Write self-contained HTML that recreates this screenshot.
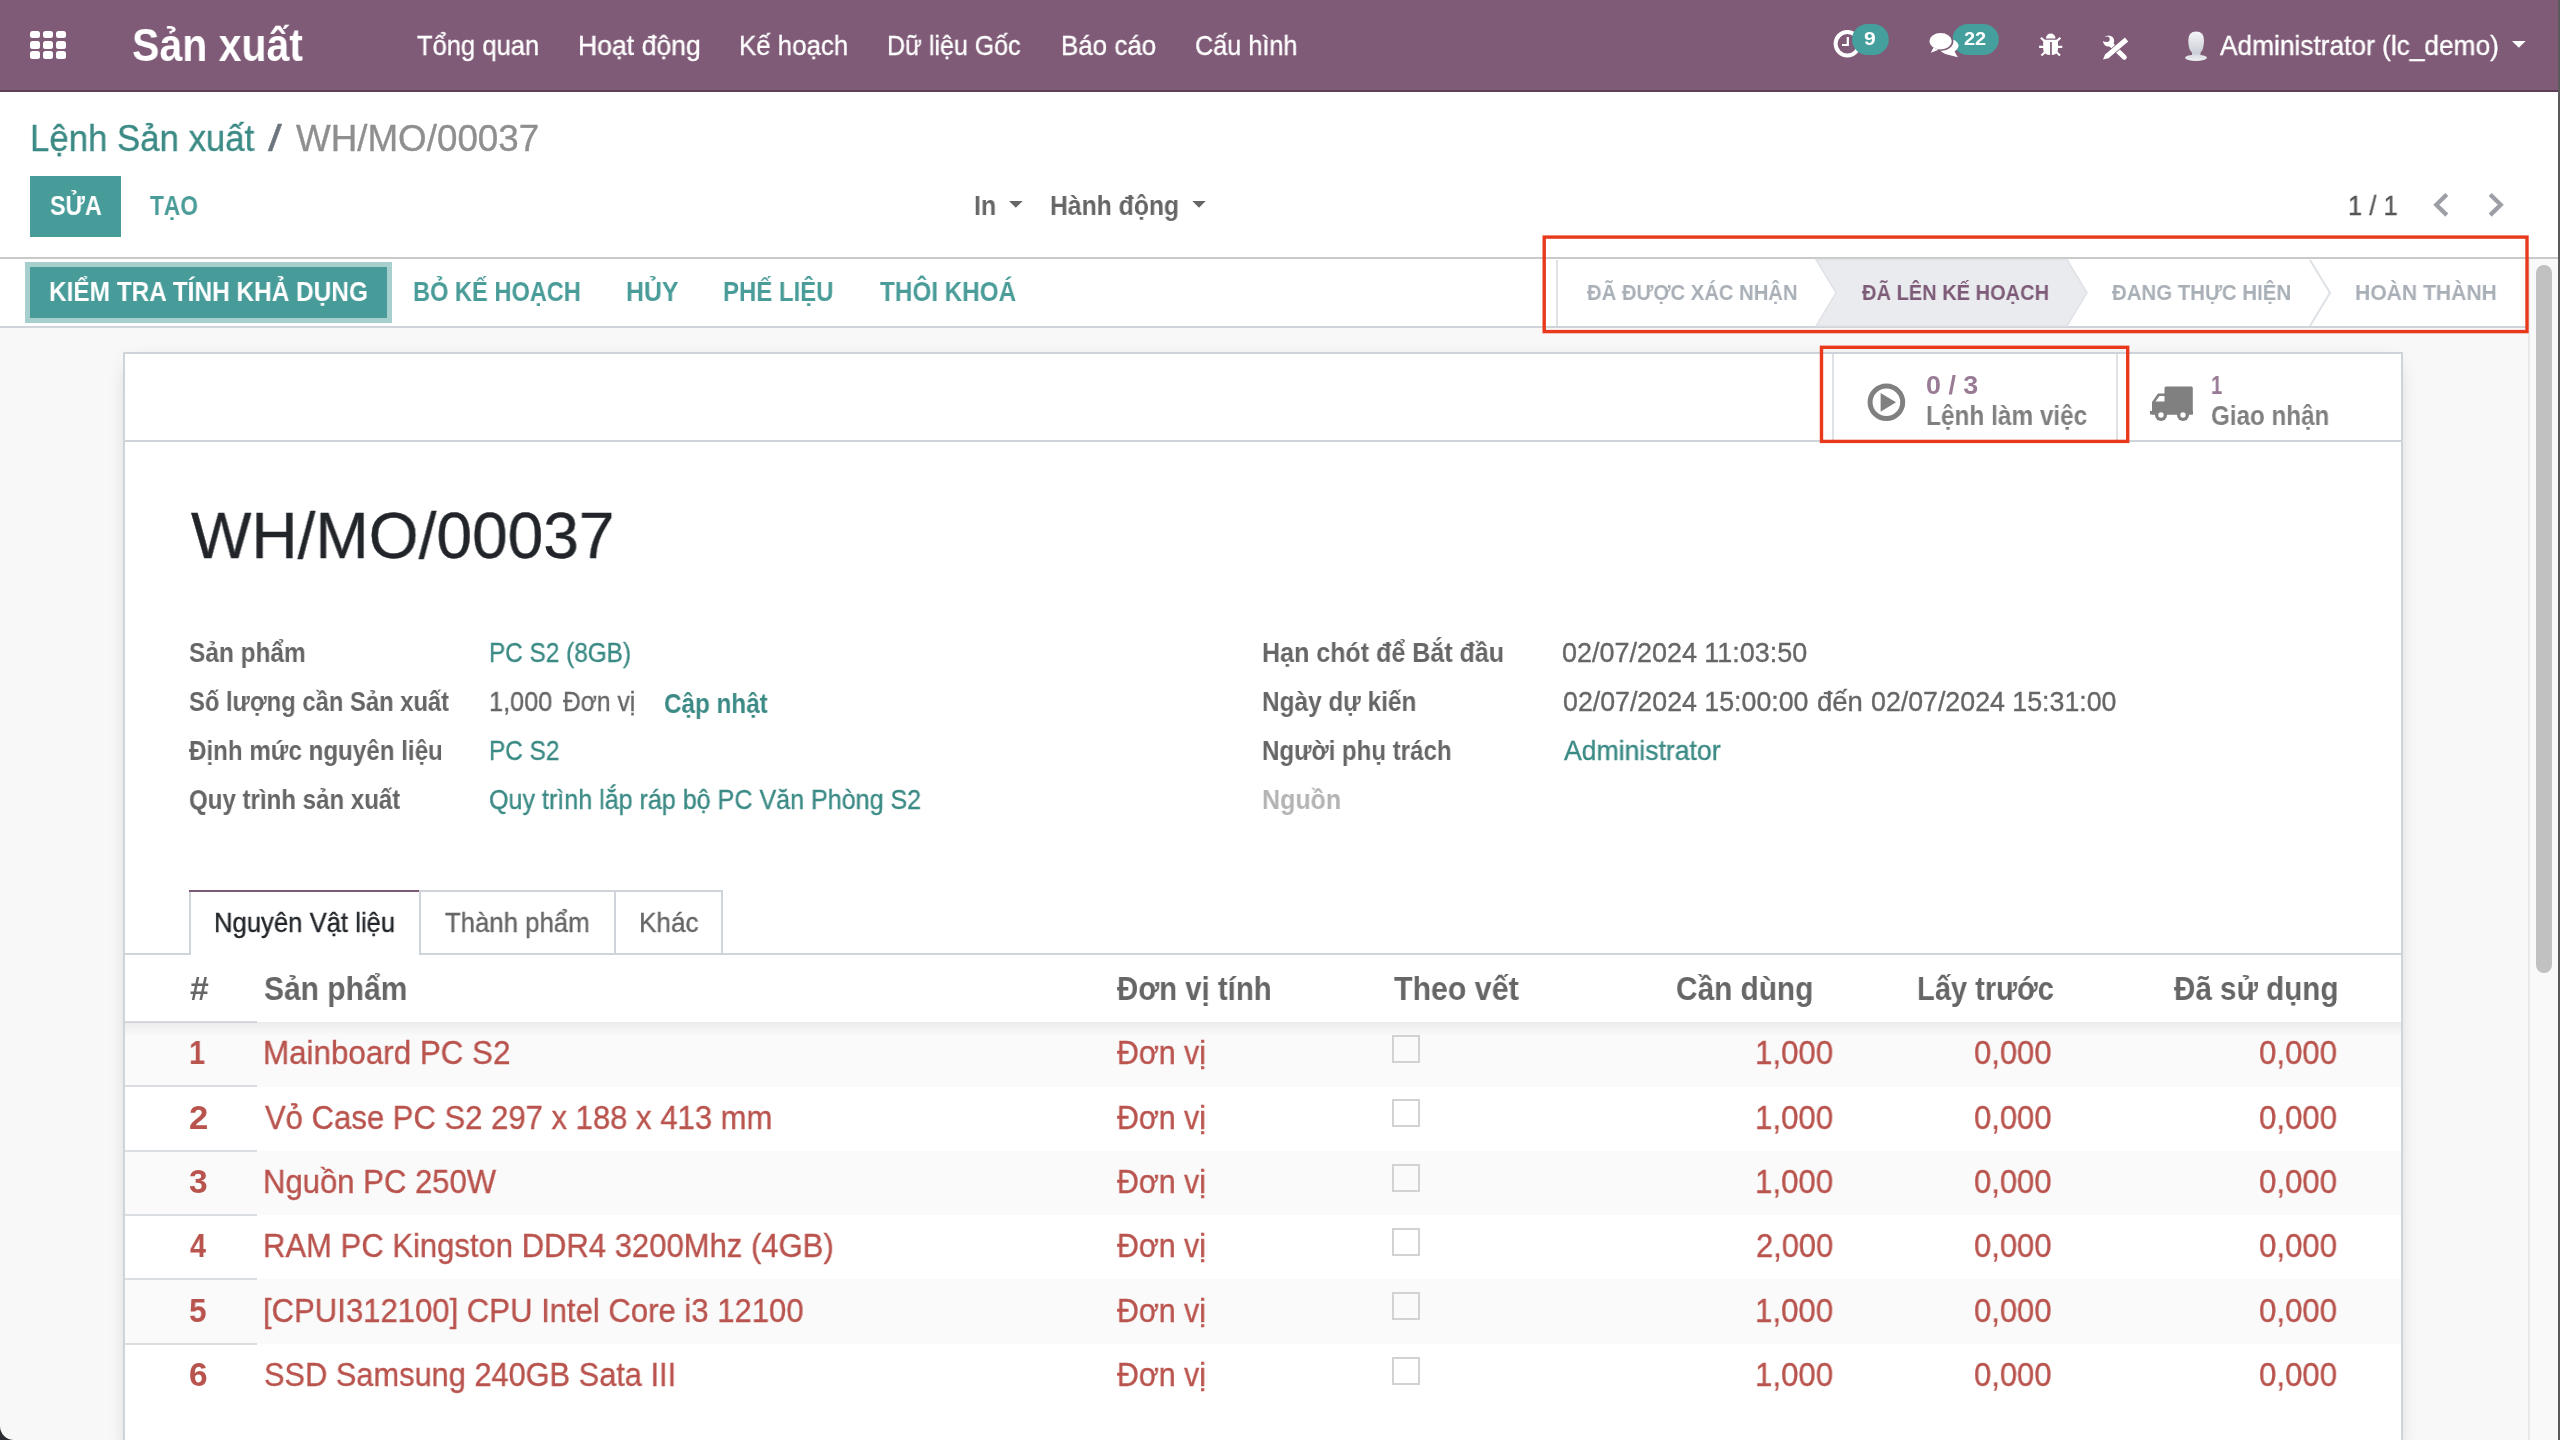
<!DOCTYPE html>
<html><head><meta charset="utf-8"><style>
html,body{margin:0;padding:0}
body{width:2560px;height:1440px;overflow:hidden;position:relative;background:#fff;font-family:"Liberation Sans",sans-serif}
.t{position:absolute;line-height:1;white-space:pre;transform-origin:0 0;will-change:transform}
.n{-webkit-text-stroke:0.35px currentColor}
</style></head><body>
<div style="position:absolute;left:0px;top:0px;width:2560px;height:90px;background:#7f5b77;"></div>
<div style="position:absolute;left:0px;top:90px;width:2560px;height:2px;background:#5e3f58;"></div>
<div style="position:absolute;left:30px;top:30.5px;width:10.299999999999997px;height:7.799999999999997px;background:#fff;border-radius:2.5px;"></div>
<div style="position:absolute;left:30px;top:40.8px;width:10.299999999999997px;height:7.799999999999997px;background:#fff;border-radius:2.5px;"></div>
<div style="position:absolute;left:30px;top:51.1px;width:10.299999999999997px;height:7.799999999999997px;background:#fff;border-radius:2.5px;"></div>
<div style="position:absolute;left:42.8px;top:30.5px;width:10.299999999999997px;height:7.799999999999997px;background:#fff;border-radius:2.5px;"></div>
<div style="position:absolute;left:42.8px;top:40.8px;width:10.299999999999997px;height:7.799999999999997px;background:#fff;border-radius:2.5px;"></div>
<div style="position:absolute;left:42.8px;top:51.1px;width:10.299999999999997px;height:7.799999999999997px;background:#fff;border-radius:2.5px;"></div>
<div style="position:absolute;left:55.8px;top:30.5px;width:10.299999999999997px;height:7.799999999999997px;background:#fff;border-radius:2.5px;"></div>
<div style="position:absolute;left:55.8px;top:40.8px;width:10.299999999999997px;height:7.799999999999997px;background:#fff;border-radius:2.5px;"></div>
<div style="position:absolute;left:55.8px;top:51.1px;width:10.299999999999997px;height:7.799999999999997px;background:#fff;border-radius:2.5px;"></div>
<div style="position:absolute;left:30px;top:176px;width:91px;height:61px;background:#479c99;"></div>
<div style="position:absolute;left:0px;top:257px;width:2560px;height:2px;background:#c9c9c9;"></div>
<div style="position:absolute;left:0px;top:328px;width:2528px;height:1112px;background:#f8f8f8;"></div>
<div style="position:absolute;left:0px;top:326px;width:2528px;height:2px;background:#ced4da;"></div>
<div style="position:absolute;left:25px;top:262px;width:367px;height:61px;background:#a6cfcd;"></div>
<div style="position:absolute;left:30px;top:267px;width:357px;height:51px;background:#479c99;"></div>
<div style="position:absolute;left:1556px;top:260px;width:2px;height:66px;background:#dee2e6;"></div>
<div style="position:absolute;left:2528px;top:259px;width:30px;height:1181px;background:#f9f9f9;"></div>
<div style="position:absolute;left:2528px;top:259px;width:2px;height:1181px;background:#e9e9e9;"></div>
<div style="position:absolute;left:2536px;top:265px;width:16px;height:708px;background:#c1c1c1;border-radius:8px;"></div>
<div style="position:absolute;left:2558px;top:0px;width:2px;height:1440px;background:#5a5a5a;"></div>
<div style="position:absolute;left:123px;top:352px;width:2280px;height:1108px;background:#fff;box-sizing:border-box;border:2px solid #ced4da;box-shadow:0 5px 20px -10px rgba(0,0,0,.35);"></div>
<div style="position:absolute;left:125px;top:440px;width:2276px;height:2px;background:#ced4da;"></div>
<div style="position:absolute;left:1832px;top:354px;width:2px;height:86px;background:#dee2e6;"></div>
<div style="position:absolute;left:2116px;top:354px;width:2px;height:86px;background:#dee2e6;"></div>
<div style="position:absolute;left:125px;top:953px;width:64px;height:2px;background:#ced4da;"></div>
<div style="position:absolute;left:419px;top:953px;width:1982px;height:2px;background:#ced4da;"></div>
<div style="position:absolute;left:189px;top:890px;width:2px;height:65px;background:#ced4da;"></div>
<div style="position:absolute;left:189px;top:890px;width:232px;height:2px;background:#7c5a77;"></div>
<div style="position:absolute;left:419px;top:890px;width:2px;height:65px;background:#ced4da;"></div>
<div style="position:absolute;left:421px;top:890px;width:302px;height:2px;background:#ced4da;"></div>
<div style="position:absolute;left:614px;top:890px;width:2px;height:65px;background:#ced4da;"></div>
<div style="position:absolute;left:721px;top:890px;width:2px;height:65px;background:#ced4da;"></div>
<div style="position:absolute;left:125px;top:1022px;width:2276px;height:64.5px;background:#fafafa;"></div>
<div style="position:absolute;left:125px;top:1021px;width:132px;height:2px;background:#dadee3;"></div>
<div style="position:absolute;left:1392px;top:1035px;width:28px;height:28px;box-sizing:border-box;border:2px solid #d2d2d2;"></div>
<div style="position:absolute;left:125px;top:1085px;width:132px;height:2px;background:#dadee3;"></div>
<div style="position:absolute;left:1392px;top:1099px;width:28px;height:28px;box-sizing:border-box;border:2px solid #d2d2d2;"></div>
<div style="position:absolute;left:125px;top:1150.5px;width:2276px;height:64.5px;background:#fafafa;"></div>
<div style="position:absolute;left:125px;top:1149.5px;width:132px;height:2.0px;background:#dadee3;"></div>
<div style="position:absolute;left:1392px;top:1163.5px;width:28px;height:28.0px;box-sizing:border-box;border:2px solid #d2d2d2;"></div>
<div style="position:absolute;left:125px;top:1214px;width:132px;height:2px;background:#dadee3;"></div>
<div style="position:absolute;left:1392px;top:1228px;width:28px;height:28px;box-sizing:border-box;border:2px solid #d2d2d2;"></div>
<div style="position:absolute;left:125px;top:1279px;width:2276px;height:64.5px;background:#fafafa;"></div>
<div style="position:absolute;left:125px;top:1278px;width:132px;height:2px;background:#dadee3;"></div>
<div style="position:absolute;left:1392px;top:1292px;width:28px;height:28px;box-sizing:border-box;border:2px solid #d2d2d2;"></div>
<div style="position:absolute;left:125px;top:1342.5px;width:132px;height:2.0px;background:#dadee3;"></div>
<div style="position:absolute;left:1392px;top:1356.5px;width:28px;height:28.0px;box-sizing:border-box;border:2px solid #d2d2d2;"></div>
<div style="position:absolute;left:125px;top:1022px;width:2276px;height:14px;background:linear-gradient(rgba(0,0,0,.06),rgba(0,0,0,0));"></div>
<svg style="position:absolute;left:0;top:0" width="2560" height="1440" viewBox="0 0 2560 1440"><polygon points="1816,259.5 2067,259.5 2087,292.8 2067,326 1816,326 1836,292.8" fill="#eaebef" stroke="#dfe2e6" stroke-width="1.5"/><polyline points="2310,260 2330,292.8 2310,326" fill="none" stroke="#dee2e6" stroke-width="2"/><rect x="1544.2" y="237.1" width="982.8" height="94.5" fill="none" stroke="#e8391d" stroke-width="3.4"/><rect x="1821.5" y="347.3" width="306.2" height="94.1" fill="none" stroke="#e8391d" stroke-width="3.4"/><polygon points="1009,201 1022.7,201 1015.85,207.7" fill="#666"/><polygon points="1192.3,201 1205.7,201 1199,207.7" fill="#666"/><polygon points="2512,41 2525.7,41 2518.85,47.8" fill="#fff"/><polyline points="2446.8,194.5 2436.3,204.8 2446.8,215.1" fill="none" stroke="#9ca0a6" stroke-width="4.3"/><polyline points="2490.2,194.5 2500.7,204.8 2490.2,215.1" fill="none" stroke="#9ca0a6" stroke-width="4.3"/><circle cx="1847.3" cy="43.8" r="11.7" fill="none" stroke="#fff" stroke-width="4"/><polyline points="1847.8,37 1847.8,45 1842,45" fill="none" stroke="#fff" stroke-width="2.2"/><rect x="1852" y="24" width="36.8" height="31" rx="15.5" fill="#459f9c"/><rect x="1952.5" y="24" width="46.3" height="31" rx="15.5" fill="#459f9c"/><path d="M1951 55.6 L1957.8 57.2 L1954.6 51.5 Q1959 48 1958.5 45 Q1957 39 1948 39 Q1939 39.5 1938.5 46 Q1939 53.5 1951 55.6Z" fill="#fff"/><ellipse cx="1940.6" cy="41.3" rx="12" ry="9" fill="#fff" stroke="#7f5b77" stroke-width="1.6"/><polygon points="1930.8,52.7 1933.5,47.5 1938.5,49.8" fill="#fff"/><g fill="#fff"><path d="M2045.9 38.4 A4.8 4.9 0 0 1 2055.5 38.4Z"/><path d="M2043.2 39.7 L2058 39.7 L2058 49 Q2058 55 2051 55 Q2043.2 55 2043.2 49Z"/></g><rect x="2050.1" y="42" width="1.7" height="13.5" fill="#7f5b77"/><g stroke="#fff" stroke-width="2.2" fill="none"><path d="M2040.9 37.8 L2044.6 41.1 M2060.4 37.8 L2056.7 41.1 M2039.1 46.8 L2044 46.8 M2062.3 46.8 L2057 46.8 M2041.4 55.5 L2045 52.2 M2060 55.5 L2056.5 52.2"/></g><line x1="2111" y1="44.5" x2="2124.3" y2="57.2" stroke="#fff" stroke-width="5" stroke-linecap="round"/><circle cx="2108.6" cy="41" r="5.6" fill="#fff"/><circle cx="2107" cy="39.3" r="2.7" fill="#7f5b77"/><polygon points="2104.5,36.5 2107.5,39.5 2105,42 2101,40 2102,35.5" fill="#7f5b77"/><polygon points="2103,59.6 2105.1,54.4 2124.9,37.5 2128.2,41.5 2108.5,58.3" fill="#fff" stroke="#7f5b77" stroke-width="1.5" paint-order="stroke"/><defs><linearGradient id="av" x1="0" y1="0" x2="0" y2="1"><stop offset="0" stop-color="#f6f6f8"/><stop offset="1" stop-color="#c8ccd4"/></linearGradient><linearGradient id="av2" x1="0" y1="0" x2="0" y2="1"><stop offset="0" stop-color="#d9dce2"/><stop offset="1" stop-color="#eceef1"/></linearGradient></defs><rect x="2192" y="49" width="8.5" height="8" fill="#cfd3da"/><ellipse cx="2196" cy="57.8" rx="11" ry="3.1" fill="url(#av2)"/><path d="M2188.3 40 Q2188.3 31.5 2196.2 31.5 Q2204 31.5 2204 40 Q2204 54 2196.2 54 Q2188.3 54 2188.3 40Z" fill="url(#av)"/><circle cx="1886.4" cy="402.2" r="16.3" fill="none" stroke="#808080" stroke-width="5"/><polygon points="1880.6,393 1896,402.3 1880.6,411.8" fill="#808080"/><g fill="#808080"><rect x="2164.5" y="386.5" width="28.3" height="28" rx="1.5"/><path d="M2152 402 L2158 393.5 L2165 393.5 L2165 414.5 L2152 414.5 Z"/><rect x="2150" y="411" width="43" height="3.5"/><circle cx="2161" cy="415" r="6"/><circle cx="2183" cy="415" r="6"/></g><g fill="#fff"><path d="M2155.5 401.5 L2159.5 396 L2164.5 396 L2164.5 401.5Z"/><circle cx="2161" cy="415" r="2.7"/><circle cx="2183" cy="415" r="2.7"/></g><path d="M0 1426 A14 14 0 0 0 14 1440 L0 1440Z" fill="#2b2d31"/></svg>
<span class="t" style="left:132.02px;top:22px;font-size:46.76px;font-weight:bold;color:#ffffff;transform:scaleX(0.8772)">Sản xuất</span>
<span class="t n" style="left:417.10px;top:33px;font-size:27.05px;font-weight:normal;color:#ffffff;transform:scaleX(0.9445)">Tổng quan</span>
<span class="t n" style="left:578.23px;top:33px;font-size:27.05px;font-weight:normal;color:#ffffff;transform:scaleX(0.9835)">Hoạt động</span>
<span class="t n" style="left:739.49px;top:33px;font-size:27.05px;font-weight:normal;color:#ffffff;transform:scaleX(0.9550)">Kế hoạch</span>
<span class="t n" style="left:887.25px;top:33px;font-size:27.05px;font-weight:normal;color:#ffffff;transform:scaleX(0.9254)">Dữ liệu Gốc</span>
<span class="t n" style="left:1060.78px;top:33px;font-size:27.05px;font-weight:normal;color:#ffffff;transform:scaleX(0.9583)">Báo cáo</span>
<span class="t n" style="left:1195.07px;top:33px;font-size:27.05px;font-weight:normal;color:#ffffff;transform:scaleX(0.9327)">Cấu hình</span>
<span class="t n" style="left:2219.50px;top:33px;font-size:26.76px;font-weight:normal;color:#ffffff;transform:scaleX(0.9823)">Administrator (lc_demo)</span>
<span class="t" style="left:1864.42px;top:30px;font-size:17.99px;font-weight:bold;color:#ffffff;transform:scaleX(1.1750)">9</span>
<span class="t" style="left:1964.14px;top:30px;font-size:17.99px;font-weight:bold;color:#ffffff;transform:scaleX(1.1111)">22</span>
<span class="t n" style="left:29.93px;top:121px;font-size:36.40px;font-weight:normal;color:#3b8a85;transform:scaleX(0.9556)">Lệnh Sản xuất</span>
<span class="t n" style="left:267.80px;top:121px;font-size:36.40px;font-weight:normal;color:#6c757d;transform:scaleX(1.3700)">/</span>
<span class="t n" style="left:296.30px;top:121px;font-size:36.40px;font-weight:normal;color:#8f8f8f;transform:scaleX(1.0105)">WH/MO/00037</span>
<span class="t" style="left:49.73px;top:193px;font-size:26.76px;font-weight:bold;color:#ffffff;transform:scaleX(0.8724)">SỬA</span>
<span class="t" style="left:149.70px;top:193px;font-size:26.76px;font-weight:bold;color:#4a9c99;transform:scaleX(0.8482)">TẠO</span>
<span class="t" style="left:973.54px;top:193px;font-size:26.76px;font-weight:bold;color:#666666;transform:scaleX(0.9300)">In</span>
<span class="t" style="left:1050.45px;top:193px;font-size:26.76px;font-weight:bold;color:#666666;transform:scaleX(0.9243)">Hành động</span>
<span class="t n" style="left:2347.71px;top:193px;font-size:26.91px;font-weight:normal;color:#555555;transform:scaleX(0.9469)">1 / 1</span>
<span class="t" style="left:48.81px;top:278px;font-size:27.34px;font-weight:bold;color:#ffffff;transform:scaleX(0.8927)">KIỂM TRA TÍNH KHẢ DỤNG</span>
<span class="t" style="left:412.77px;top:278px;font-size:27.34px;font-weight:bold;color:#4a9c99;transform:scaleX(0.8639)">BỎ KẾ HOẠCH</span>
<span class="t" style="left:625.68px;top:278px;font-size:27.34px;font-weight:bold;color:#4a9c99;transform:scaleX(0.9091)">HỦY</span>
<span class="t" style="left:723.25px;top:278px;font-size:27.34px;font-weight:bold;color:#4a9c99;transform:scaleX(0.8770)">PHẾ LIỆU</span>
<span class="t" style="left:879.50px;top:278px;font-size:27.34px;font-weight:bold;color:#4a9c99;transform:scaleX(0.8882)">THÔI KHOÁ</span>
<span class="t" style="left:1587.40px;top:281px;font-size:22.73px;font-weight:bold;color:#a9afb6;transform:scaleX(0.8906)">ĐÃ ĐƯỢC XÁC NHẬN</span>
<span class="t" style="left:1861.60px;top:281px;font-size:22.73px;font-weight:bold;color:#7d5a77;transform:scaleX(0.8820)">ĐÃ LÊN KẾ HOẠCH</span>
<span class="t" style="left:2112.30px;top:281px;font-size:22.73px;font-weight:bold;color:#a9afb6;transform:scaleX(0.8985)">ĐANG THỰC HIỆN</span>
<span class="t" style="left:2354.87px;top:281px;font-size:22.73px;font-weight:bold;color:#a9afb6;transform:scaleX(0.9287)">HOÀN THÀNH</span>
<span class="t" style="left:1926.23px;top:372px;font-size:26.47px;font-weight:bold;color:#9a7b96;transform:scaleX(1.0150)">0 / 3</span>
<span class="t" style="left:1926.19px;top:403px;font-size:26.98px;font-weight:bold;color:#808080;transform:scaleX(0.9043)">Lệnh làm việc</span>
<span class="t" style="left:2211.22px;top:372px;font-size:26.47px;font-weight:bold;color:#9a7b96;transform:scaleX(0.7625)">1</span>
<span class="t" style="left:2211.00px;top:403px;font-size:26.98px;font-weight:bold;color:#808080;transform:scaleX(0.8961)">Giao nhận</span>
<span class="t n" style="left:190.50px;top:504px;font-size:64.75px;font-weight:normal;color:#212529;transform:scaleX(0.9887)">WH/MO/00037</span>
<span class="t" style="left:189.01px;top:639px;font-size:27.34px;font-weight:bold;color:#666666;transform:scaleX(0.8938)">Sản phẩm</span>
<span class="t" style="left:189.03px;top:688px;font-size:27.34px;font-weight:bold;color:#666666;transform:scaleX(0.8701)">Số lượng cần Sản xuất</span>
<span class="t" style="left:188.60px;top:737px;font-size:27.34px;font-weight:bold;color:#666666;transform:scaleX(0.8842)">Định mức nguyên liệu</span>
<span class="t" style="left:189.02px;top:786px;font-size:27.34px;font-weight:bold;color:#666666;transform:scaleX(0.8808)">Quy trình sản xuất</span>
<span class="t n" style="left:488.98px;top:640px;font-size:26.76px;font-weight:normal;color:#3b8a85;transform:scaleX(0.9098)">PC S2 (8GB)</span>
<span class="t n" style="left:489.11px;top:689px;font-size:26.76px;font-weight:normal;color:#666666;transform:scaleX(0.9453)">1,000</span>
<span class="t n" style="left:562.70px;top:689px;font-size:26.76px;font-weight:normal;color:#666666;transform:scaleX(0.9208)">Đơn vị</span>
<span class="t" style="left:664.19px;top:691px;font-size:26.76px;font-weight:bold;color:#3b8a85;transform:scaleX(0.9062)">Cập nhật</span>
<span class="t n" style="left:488.98px;top:738px;font-size:26.76px;font-weight:normal;color:#3b8a85;transform:scaleX(0.9108)">PC S2</span>
<span class="t n" style="left:488.96px;top:787px;font-size:26.76px;font-weight:normal;color:#3b8a85;transform:scaleX(0.9375)">Quy trình lắp ráp bộ PC Văn Phòng S2</span>
<span class="t" style="left:1261.57px;top:639px;font-size:27.34px;font-weight:bold;color:#666666;transform:scaleX(0.9162)">Hạn chót để Bắt đầu</span>
<span class="t" style="left:1261.62px;top:688px;font-size:27.34px;font-weight:bold;color:#666666;transform:scaleX(0.8912)">Ngày dự kiến</span>
<span class="t" style="left:1261.64px;top:737px;font-size:27.34px;font-weight:bold;color:#666666;transform:scaleX(0.8802)">Người phụ trách</span>
<span class="t" style="left:1261.57px;top:786px;font-size:27.34px;font-weight:bold;color:#b4b4b4;transform:scaleX(0.9157)">Nguồn</span>
<span class="t n" style="left:1562.49px;top:640px;font-size:26.76px;font-weight:normal;color:#666666;transform:scaleX(1.0074)">02/07/2024 11:03:50</span>
<span class="t n" style="left:1562.50px;top:689px;font-size:26.76px;font-weight:normal;color:#666666;transform:scaleX(0.9992)">02/07/2024 15:00:00</span>
<span class="t n" style="left:1816.97px;top:689px;font-size:26.76px;font-weight:normal;color:#666666;transform:scaleX(1.0286)">đến</span>
<span class="t n" style="left:1871.00px;top:689px;font-size:26.76px;font-weight:normal;color:#666666;transform:scaleX(0.9988)">02/07/2024 15:31:00</span>
<span class="t n" style="left:1563.50px;top:738px;font-size:26.76px;font-weight:normal;color:#3b8a85;transform:scaleX(0.9937)">Administrator</span>
<span class="t n" style="left:214.48px;top:910px;font-size:26.76px;font-weight:normal;color:#212529;transform:scaleX(0.9589)">Nguyên Vật liệu</span>
<span class="t n" style="left:445.30px;top:910px;font-size:26.76px;font-weight:normal;color:#666666;transform:scaleX(0.9624)">Thành phẩm</span>
<span class="t n" style="left:639.24px;top:910px;font-size:26.76px;font-weight:normal;color:#666666;transform:scaleX(0.9776)">Khác</span>
<span class="t" style="left:189.80px;top:972px;font-size:33.81px;font-weight:bold;color:#666666;transform:scaleX(0.9944)">#</span>
<span class="t" style="left:263.91px;top:972px;font-size:33.81px;font-weight:bold;color:#666666;transform:scaleX(0.8874)">Sản phẩm</span>
<span class="t" style="left:1117.20px;top:972px;font-size:33.81px;font-weight:bold;color:#666666;transform:scaleX(0.8693)">Đơn vị tính</span>
<span class="t" style="left:1393.90px;top:972px;font-size:33.81px;font-weight:bold;color:#666666;transform:scaleX(0.8964)">Theo vết</span>
<span class="t" style="left:1676.12px;top:972px;font-size:33.81px;font-weight:bold;color:#666666;transform:scaleX(0.8810)">Cần dùng</span>
<span class="t" style="left:1916.68px;top:972px;font-size:33.81px;font-weight:bold;color:#666666;transform:scaleX(0.8590)">Lấy trước</span>
<span class="t" style="left:2174.00px;top:972px;font-size:33.81px;font-weight:bold;color:#666666;transform:scaleX(0.8753)">Đã sử dụng</span>
<span class="t" style="left:188.58px;top:1036px;font-size:33.53px;font-weight:bold;color:#b9534d;transform:scaleX(0.8625)">1</span>
<span class="t n" style="left:263.33px;top:1036px;font-size:33.53px;font-weight:normal;color:#b9534d;transform:scaleX(0.9352)">Mainboard PC S2</span>
<span class="t n" style="left:1117.20px;top:1036px;font-size:33.53px;font-weight:normal;color:#b9534d;transform:scaleX(0.9031)">Đơn vị</span>
<span class="t n" style="left:1754.64px;top:1036px;font-size:33.53px;font-weight:normal;color:#b9534d;transform:scaleX(0.9321)">1,000</span>
<span class="t n" style="left:1974.48px;top:1036px;font-size:33.53px;font-weight:normal;color:#b9534d;transform:scaleX(0.9244)">0,000</span>
<span class="t n" style="left:2258.57px;top:1036px;font-size:33.53px;font-weight:normal;color:#b9534d;transform:scaleX(0.9305)">0,000</span>
<span class="t" style="left:189.26px;top:1101px;font-size:33.53px;font-weight:bold;color:#b9534d;transform:scaleX(1.0375)">2</span>
<span class="t n" style="left:265.20px;top:1101px;font-size:33.53px;font-weight:normal;color:#b9534d;transform:scaleX(0.9264)">Vỏ Case PC S2 297 x 188 x 413 mm</span>
<span class="t n" style="left:1117.20px;top:1101px;font-size:33.53px;font-weight:normal;color:#b9534d;transform:scaleX(0.9031)">Đơn vị</span>
<span class="t n" style="left:1754.64px;top:1101px;font-size:33.53px;font-weight:normal;color:#b9534d;transform:scaleX(0.9321)">1,000</span>
<span class="t n" style="left:1974.48px;top:1101px;font-size:33.53px;font-weight:normal;color:#b9534d;transform:scaleX(0.9244)">0,000</span>
<span class="t n" style="left:2258.57px;top:1101px;font-size:33.53px;font-weight:normal;color:#b9534d;transform:scaleX(0.9305)">0,000</span>
<span class="t" style="left:189.30px;top:1165px;font-size:33.53px;font-weight:bold;color:#b9534d;transform:scaleX(1.0000)">3</span>
<span class="t n" style="left:263.35px;top:1165px;font-size:33.53px;font-weight:normal;color:#b9534d;transform:scaleX(0.9269)">Nguồn PC 250W</span>
<span class="t n" style="left:1117.20px;top:1165px;font-size:33.53px;font-weight:normal;color:#b9534d;transform:scaleX(0.9031)">Đơn vị</span>
<span class="t n" style="left:1754.64px;top:1165px;font-size:33.53px;font-weight:normal;color:#b9534d;transform:scaleX(0.9321)">1,000</span>
<span class="t n" style="left:1974.48px;top:1165px;font-size:33.53px;font-weight:normal;color:#b9534d;transform:scaleX(0.9244)">0,000</span>
<span class="t n" style="left:2258.57px;top:1165px;font-size:33.53px;font-weight:normal;color:#b9534d;transform:scaleX(0.9305)">0,000</span>
<span class="t" style="left:190.30px;top:1229px;font-size:33.53px;font-weight:bold;color:#b9534d;transform:scaleX(0.8684)">4</span>
<span class="t n" style="left:263.35px;top:1229px;font-size:33.53px;font-weight:normal;color:#b9534d;transform:scaleX(0.9256)">RAM PC Kingston DDR4 3200Mhz (4GB)</span>
<span class="t n" style="left:1117.20px;top:1229px;font-size:33.53px;font-weight:normal;color:#b9534d;transform:scaleX(0.9031)">Đơn vị</span>
<span class="t n" style="left:1755.58px;top:1229px;font-size:33.53px;font-weight:normal;color:#b9534d;transform:scaleX(0.9207)">2,000</span>
<span class="t n" style="left:1974.48px;top:1229px;font-size:33.53px;font-weight:normal;color:#b9534d;transform:scaleX(0.9244)">0,000</span>
<span class="t n" style="left:2258.57px;top:1229px;font-size:33.53px;font-weight:normal;color:#b9534d;transform:scaleX(0.9305)">0,000</span>
<span class="t" style="left:189.36px;top:1294px;font-size:33.53px;font-weight:bold;color:#b9534d;transform:scaleX(0.9412)">5</span>
<span class="t n" style="left:263.35px;top:1294px;font-size:33.53px;font-weight:normal;color:#b9534d;transform:scaleX(0.9271)">[CPUI312100] CPU Intel Core i3 12100</span>
<span class="t n" style="left:1117.20px;top:1294px;font-size:33.53px;font-weight:normal;color:#b9534d;transform:scaleX(0.9031)">Đơn vị</span>
<span class="t n" style="left:1754.64px;top:1294px;font-size:33.53px;font-weight:normal;color:#b9534d;transform:scaleX(0.9321)">1,000</span>
<span class="t n" style="left:1974.48px;top:1294px;font-size:33.53px;font-weight:normal;color:#b9534d;transform:scaleX(0.9244)">0,000</span>
<span class="t n" style="left:2258.57px;top:1294px;font-size:33.53px;font-weight:normal;color:#b9534d;transform:scaleX(0.9305)">0,000</span>
<span class="t" style="left:189.30px;top:1358px;font-size:33.53px;font-weight:bold;color:#b9534d;transform:scaleX(1.0000)">6</span>
<span class="t n" style="left:264.28px;top:1358px;font-size:33.53px;font-weight:normal;color:#b9534d;transform:scaleX(0.9180)">SSD Samsung 240GB Sata III</span>
<span class="t n" style="left:1117.20px;top:1358px;font-size:33.53px;font-weight:normal;color:#b9534d;transform:scaleX(0.9031)">Đơn vị</span>
<span class="t n" style="left:1754.64px;top:1358px;font-size:33.53px;font-weight:normal;color:#b9534d;transform:scaleX(0.9321)">1,000</span>
<span class="t n" style="left:1974.48px;top:1358px;font-size:33.53px;font-weight:normal;color:#b9534d;transform:scaleX(0.9244)">0,000</span>
<span class="t n" style="left:2258.57px;top:1358px;font-size:33.53px;font-weight:normal;color:#b9534d;transform:scaleX(0.9305)">0,000</span>
</body></html>
